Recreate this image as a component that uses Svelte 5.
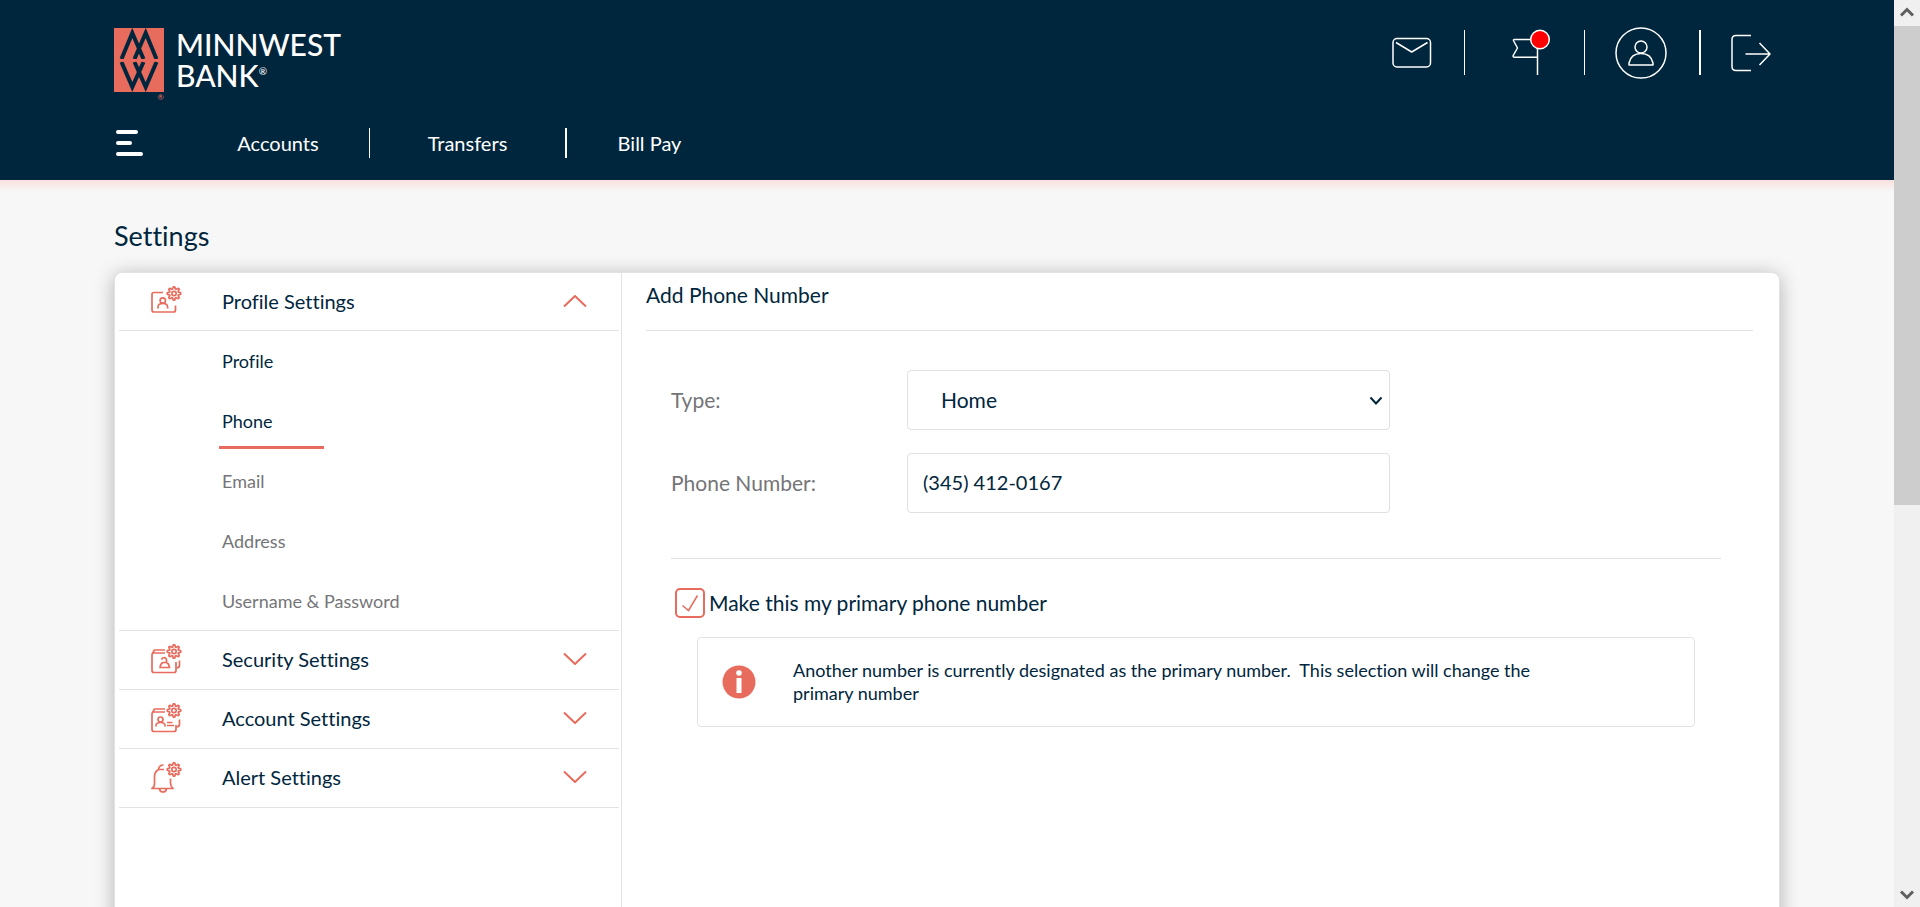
<script>
  let phoneType = $state('Home');
  let phone = $state('(345) 412-0167');
  let primary = $state(true);

  const profileLinks = [
    { label: 'Profile', tone: 'dark' },
    { label: 'Phone', tone: 'dark', active: true },
    { label: 'Email' },
    { label: 'Address' },
    { label: 'Username & Password' }
  ];
  const sections = [
    { id: 'security', label: 'Security Settings' },
    { id: 'account', label: 'Account Settings' },
    { id: 'alert', label: 'Alert Settings' }
  ];

  // Eight-lobed cog outline centred on the origin
  const cog = Array.from({ length: 64 }, (_, i) => {
    const a = (i / 64) * Math.PI * 2;
    const r = 5.7 + 1.1 * Math.tanh(2.2 * Math.cos(a * 8));
    return `${(r * Math.sin(a)).toFixed(2)} ${(-r * Math.cos(a)).toFixed(2)}`;
  }).join(' L');
</script>

{#snippet gear()}
  <g transform="translate(23 8.500)">
    <path d={`M${cog}Z`} />
    <circle r="2.2" />
  </g>
{/snippet}

{#snippet sectionIcon(id)}
  <svg class="section-icon" width="32" height="32" viewBox="0 0 32 32" aria-hidden="true">
    {@render gear()}
    {#if id === 'profile'}
      <path d="M12 7.5H3Q1 7.5 1 9.500V25Q1 27 3 27H22.500Q24.500 27 24.500 25V20.500" />
      <circle cx="11.800" cy="15.500" r="2.700" />
      <path d="M7 23.500V22Q7 18.500 11.800 18.500Q16.600 18.500 16.600 22V23.500" />
    {:else if id === 'security'}
      <path d="M14 10H3Q1 10 1 12V27.500Q1 29.500 3 29.500H23Q25 29.500 25 27.500V19" />
      <path d="M1.500 10.500L3.500 7H14M28.500 17.500V22Q28.500 25 25.500 25" />
      <path d="M10.500 16.500Q11.500 14.500 13.500 14.500Q16 15 15.500 19.500M9 24.500H18.500Q18 20.500 15.500 19.500H12Q9.500 20.500 9 24.500Z" />
    {:else if id === 'account'}
      <path d="M14 10H3Q1 10 1 12V27.500Q1 29.500 3 29.500H23Q25 29.500 25 27.500V23" />
      <path d="M1.500 10.500L3.500 7H14M28.500 17.500V22Q28.500 25 25.500 25" />
      <circle cx="9.500" cy="17.500" r="2.500" />
      <path d="M5 24.500V23.500Q5 20.500 9.500 20.500Q14 20.500 14 23.500V24.500M16 20.500H21.500M16 23.500H23" />
    {:else}
      <path d="M13 8.500H7.500Q8 4 12.500 4M7.500 8.500Q3.500 11 3.500 15.500V23Q3.500 26 1 27.500H22Q19.500 25.500 19.500 22V17.500M8.500 28Q9 31 12 31Q15 31 15.500 28" />
    {/if}
  </svg>
{/snippet}

<div class="shell">
  <div class="page">
    <header>
      <div class="top">
        <a class="brand" href="#home" aria-label="Minnwest Bank">
          <span class="mark">
            <svg width="50" height="64" viewBox="0 0 50 64" aria-hidden="true">
              <path class="tile" d="M0 0H50V64H0Z" />
              <path class="weave" d="M7.500 31L18.300 5L29.500 31M20.500 31L31.700 5L42.500 31M7.500 34L18.300 59L29.500 34M20.500 34L31.700 59L42.500 34" />
              <path class="tile" d="M0 31H50V33.700H0Z" />
            </svg>
            <small class="reg">®</small>
          </span>
          <span class="name"><span>MINNWEST</span><span>BANK<sup>®</sup></span></span>
        </a>
        <div class="actions">
          <button class="mail" aria-label="Messages">
            <svg width="40" height="32" viewBox="0 0 40 32"><rect x="1" y="1.500" width="37.500" height="28.500" rx="4" /><path d="M4 5.500L19.700 15L35.500 5.500" /></svg>
          </button>
          <button class="flag" aria-label="Alerts">
            <svg width="40" height="48" viewBox="0 0 40 48"><path d="M25.500 46V10.500H2.500Q1 10.500 1.700 12L5.500 19L1.200 26.500Q.800 28.300 2.500 28.300H25.500" /><circle class="dot" cx="28" cy="10.500" r="9.300" /></svg>
          </button>
          <button class="user" aria-label="Profile">
            <svg width="52" height="52" viewBox="0 0 52 52"><circle cx="26" cy="26" r="25" /><circle cx="26" cy="20" r="6" /><path d="M14 38V36Q16 26.500 26 26.500Q36 26.500 38 36V38Z" /></svg>
          </button>
          <button class="exit" aria-label="Log out">
            <svg width="40" height="38" viewBox="0 0 40 38"><path d="M20 1.500H5Q1 1.500 1 5.500V32.500Q1 36.500 5 36.500H20M14.500 20H39M28.500 9L39 20L28.500 31" /></svg>
          </button>
        </div>
      </div>
      <nav>
        <button class="menu" aria-label="Menu"><i></i><i></i><i></i></button>
        <a class="accounts" href="#accounts">Accounts</a>
        <a class="transfers" href="#transfers">Transfers</a>
        <a class="bills" href="#bills">Bill Pay</a>
      </nav>
    </header>

    <main>
      <h1>Settings</h1>
      <div class="card">
        <aside>
          <button class="section first">
            {@render sectionIcon('profile')}
            <span>Profile Settings</span>
            <svg class="caret" width="24" height="14" viewBox="0 0 24 14" aria-hidden="true"><path d="M1 12.500L12 2L23 12.500" /></svg>
          </button>
          <ul>
            {#each profileLinks as link}
              <li><a href="#{link.label}" class:dark={link.tone === 'dark'} class:active={link.active}>{link.label}</a></li>
            {/each}
          </ul>
          {#each sections as s}
            <button class="section">
              {@render sectionIcon(s.id)}
              <span>{s.label}</span>
              <svg class="caret" width="24" height="14" viewBox="0 0 24 14" aria-hidden="true"><path d="M1 1.500L12 12L23 1.500" /></svg>
            </button>
          {/each}
        </aside>

        <section class="content">
          <h2>Add Phone Number</h2>
          <form>
            <div class="field">
              <label for="type">Type:</label>
              <div class="control">
                <select id="type" bind:value={phoneType}>
                  <option>Home</option>
                  <option>Mobile</option>
                  <option>Work</option>
                </select>
                <svg class="arrow" width="14" height="10" viewBox="0 0 14 10" aria-hidden="true"><path d="M1.500 1.500L7 7.500L12.500 1.500" /></svg>
              </div>
            </div>
            <div class="field">
              <label for="phone">Phone Number:</label>
              <div class="control"><input id="phone" type="text" bind:value={phone} /></div>
            </div>
            <hr />
            <label class="primary">
              <span class="tick">
                <input type="checkbox" bind:checked={primary} />
                <svg width="30" height="30" viewBox="0 0 30 30" aria-hidden="true"><path d="M7.500 17.500L13.500 22.500L22.500 7.500" /></svg>
              </span>
              Make this my primary phone number
            </label>
            <div class="notice">
              <svg width="34" height="34" viewBox="0 0 34 34" aria-hidden="true"><circle cx="17" cy="17" r="16.500" /><circle class="i" cx="17" cy="8" r="2.800" /><path class="i" d="M14.500 13H19.500V28H14.500Z" /></svg>
              <p>Another number is currently designated as the primary number.&nbsp; This selection will change the primary number</p>
            </div>
          </form>
        </section>
      </div>
    </main>
  </div>

  <div class="scrollbar" aria-hidden="true">
    <svg width="26" height="26" viewBox="0 0 26 26"><path d="M7 15.500L13 9.500L19 15.500" /></svg>
    <div class="track"><div class="thumb"></div></div>
    <svg width="26" height="26" viewBox="0 0 26 26"><path d="M7 10.500L13 16.500L19 10.500" /></svg>
  </div>
</div>

<style>
  :global(body) {
    margin: 0;
    background: #f7f7f7;
  }
  .shell {
    --navy: #00263d;
    --coral: #e86c5d;
    --line: #e2e2e2;
    --grey: #757578;
    display: flex;
    height: 100vh;
    overflow: hidden;
    color: var(--navy);
    font-family: Lato, 'Open Sans', sans-serif;
    font-size: 20px;
    line-height: 24px;
    font-variant-ligatures: none;
  }
  .shell * {
    box-sizing: border-box;
  }
  svg {
    display: block;
    flex: none;
    fill: none;
  }
  a {
    color: inherit;
    text-decoration: none;
  }
  button,
  input,
  select {
    font: inherit;
    color: inherit;
    margin: 0;
  }
  button {
    padding: 0;
    border: 0;
    background: none;
    font-variant-ligatures: none;
  }
  .page {
    flex: 1;
    min-width: 0;
    display: flex;
    flex-direction: column;
  }

  header {
    flex: none;
    padding: 26px 114px 19px;
    background: var(--navy);
    color: #fff;
  }
  .top {
    display: flex;
    justify-content: space-between;
    align-items: flex-start;
    height: 99px;
  }
  .brand {
    display: flex;
    gap: 12px;
    padding-top: 2px;
  }
  .mark {
    position: relative;
  }
  .reg {
    position: absolute;
    right: 0;
    bottom: -9px;
    color: var(--coral);
    font-size: 8px;
    line-height: 8px;
  }
  .tile {
    fill: var(--coral);
  }
  .weave {
    stroke: var(--navy);
    stroke-width: 4;
  }
  .name {
    display: flex;
    flex-direction: column;
    padding-top: 1px;
    font-size: 30px;
    line-height: 31px;
    font-weight: 500;
  }
  .name sup {
    font-size: 10px;
    line-height: 10px;
    vertical-align: 12px;
  }
  .actions {
    display: flex;
    align-items: center;
    height: 53px;
  }
  .actions button {
    display: flex;
    justify-content: center;
    align-items: center;
    height: 45px;
    border-right: 1px solid #fff;
  }
  .actions svg {
    stroke: #fff;
    stroke-width: 1.5;
    stroke-linejoin: round;
  }
  .actions .mail {
    width: 105px;
  }
  .actions .flag {
    width: 120px;
    padding-left: 14px;
  }
  .actions .user {
    width: 116px;
    padding-right: 2px;
    border-right-width: 2px;
  }
  .actions .exit {
    width: 79px;
    padding-left: 20px;
    border: 0;
  }
  .actions .dot {
    fill: #f00;
  }
  nav {
    display: flex;
    align-items: center;
    height: 36px;
  }
  nav a {
    display: flex;
    justify-content: center;
    align-items: center;
    height: 30px;
    border-right: 1px solid #fff;
  }
  .menu {
    display: flex;
    flex-direction: column;
    gap: 7px;
    width: 73px;
    padding-left: 2px;
  }
  .menu i {
    width: 27px;
    height: 4px;
    border-radius: 2px;
    background: #fff;
  }
  .menu i:nth-child(1) {
    width: 22px;
  }
  .menu i:nth-child(2) {
    width: 16px;
  }
  .accounts {
    width: 183px;
  }
  .transfers {
    width: 197px;
    border-right-width: 2px;
  }
  .bills {
    width: 165px;
    border: 0;
  }

  main {
    flex: 1;
    min-height: 0;
    display: flex;
    flex-direction: column;
    padding: 40px 114px 0;
    background: linear-gradient(#f9e0de, #f7f7f7 12px);
  }
  h1,
  h2 {
    margin: 0;
    font-weight: 400;
  }
  h1 {
    flex: none;
    height: 52px;
    font-size: 27px;
    line-height: 32px;
  }
  .card {
    flex: 1 0 auto;
    display: grid;
    grid-template-columns: minmax(280px, 507px) 1fr;
    margin-bottom: -40px;
    border: 1px solid var(--line);
    border-radius: 8px;
    background: #fff;
    box-shadow: 0 3px 20px rgba(0, 0, 0, 0.28);
  }
  aside {
    padding: 0 2px 0 4px;
    border-right: 1px solid var(--line);
  }
  .section {
    display: flex;
    align-items: center;
    width: 100%;
    height: 59px;
    padding: 0 32px 2px 32px;
    border-bottom: 1px solid var(--line);
    text-align: left;
  }
  .section.first {
    height: 58px;
  }
  .section span {
    flex: 1;
  }
  .section-icon {
    margin-right: 39px;
    stroke: var(--coral);
    stroke-width: 1.7;
    stroke-linejoin: round;
  }
  .caret {
    stroke: var(--coral);
    stroke-width: 2;
    stroke-linejoin: round;
  }
  ul {
    margin: 0;
    padding: 0 0 0 100px;
    list-style: none;
    border-bottom: 1px solid var(--line);
    font-size: 18px;
  }
  li a {
    display: flex;
    align-items: center;
    height: 60px;
    padding-left: 3px;
    color: var(--grey);
  }
  li:last-child a {
    height: 59px;
  }
  li a.dark {
    color: var(--navy);
  }
  li a.active {
    width: 105px;
    height: 58px;
    padding-top: 4px;
    margin-bottom: 2px;
    border-bottom: 3px solid var(--coral);
  }

  .content {
    padding: 0 26px 0 24px;
  }
  h2 {
    height: 58px;
    padding-top: 10px;
    border-bottom: 1px solid var(--line);
    font-size: 21px;
    line-height: 24px;
  }
  form {
    padding: 39px 32px 0 25px;
    font-size: 21px;
  }
  .field {
    display: flex;
    align-items: center;
    margin-bottom: 23px;
  }
  .field label {
    width: 236px;
    color: var(--grey);
  }
  .control {
    position: relative;
    width: 46%;
  }
  .control input,
  .control select {
    display: block;
    width: 100%;
    height: 60px;
    border: 1px solid #e0e0e0;
    border-radius: 4px;
    background: #fff;
    appearance: none;
    padding: 0 15px;
  }
  .control input {
    padding-bottom: 2px;
    font-size: 20px;
  }
  .control select {
    padding-left: 33px;
  }
  .arrow {
    position: absolute;
    top: 26px;
    right: 7px;
    stroke: var(--navy);
    stroke-width: 2;
    pointer-events: none;
  }
  hr {
    margin: 45px 0 29px;
    border: 0;
    border-top: 1px solid var(--line);
  }
  .primary {
    display: flex;
    align-items: center;
    gap: 4px;
    padding-left: 4px;
  }
  .tick {
    position: relative;
    width: 30px;
    height: 30px;
  }
  .tick input {
    display: block;
    width: 30px;
    height: 30px;
    border: 2px solid var(--coral);
    border-radius: 5px;
    appearance: none;
    background: #fff;
  }
  .tick svg {
    position: absolute;
    inset: 0;
    stroke: var(--coral);
    stroke-width: 1.5;
    pointer-events: none;
  }
  .tick input:not(:checked) + svg {
    display: none;
  }
  .notice {
    display: flex;
    align-items: center;
    gap: 37px;
    min-height: 90px;
    margin: 19px 26px 0;
    padding: 0 130px 0 24px;
    border: 1px solid var(--line);
    border-radius: 4px;
    font-size: 18px;
    line-height: 23px;
  }
  .notice svg {
    fill: var(--coral);
  }
  .notice .i {
    fill: #fff;
  }
  .notice p {
    margin: 0;
    max-width: 760px;
  }

  .scrollbar {
    flex: none;
    display: flex;
    flex-direction: column;
    width: 26px;
    background: #f0f0f0;
  }
  .scrollbar svg {
    stroke: #606060;
    stroke-width: 3;
  }
  .track {
    flex: 1;
  }
  .thumb {
    height: 56%;
    background: #cdcdcd;
  }
</style>
